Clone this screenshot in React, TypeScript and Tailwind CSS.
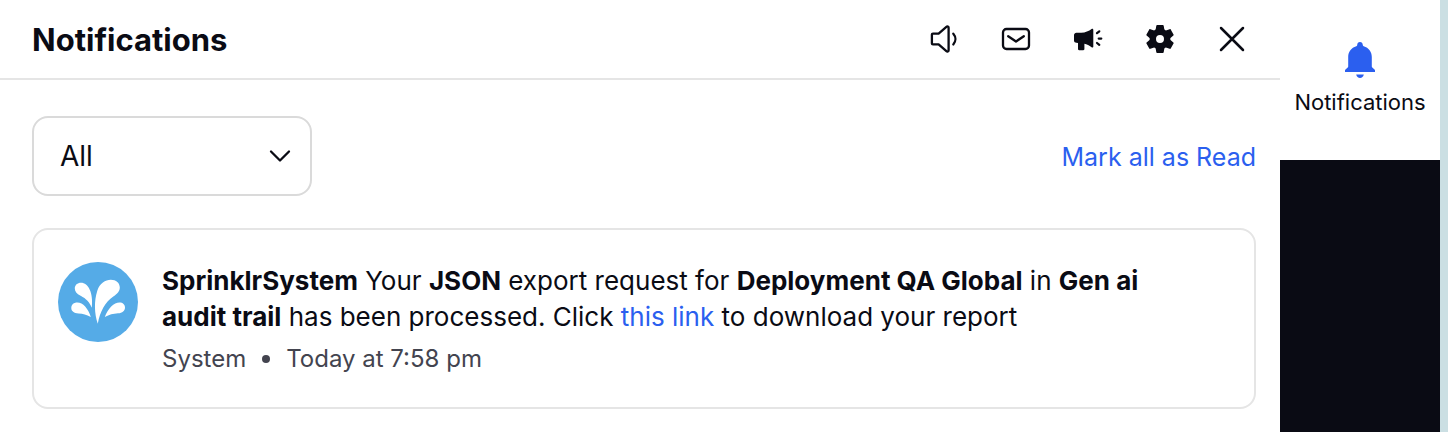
import type { ReactNode } from 'react';

type IconButtonProps = { label: string; children: ReactNode };

function IconButton({ label, children }: IconButtonProps) {
  return (
    <button type="button" aria-label={label} className="flex size-8 items-center justify-center">
      {children}
    </button>
  );
}

const line = {
  fill: 'none',
  stroke: 'currentColor',
  strokeWidth: 2.3,
  strokeLinecap: 'round',
  strokeLinejoin: 'round',
} as const;

function SpeakerIcon() {
  return (
    <svg viewBox="0 0 32 32" className="size-8" {...line}>
      <path d="M4.900 10.600h5.700l7.800-6.800c.9-.8 2.200-.3 2.200.9v22.600c0 1.200-1.300 1.700-2.200.9l-7.800-6.800H4.900c-.7 0-1-.4-1-1v-8.800c0-.6.3-1 1-1Z" />
      <path d="M25.300 10.700c2.800 3.200 2.800 7.600 0 10.800" />
    </svg>
  );
}

function MailIcon() {
  return (
    <svg viewBox="0 0 32 32" className="size-8" {...line}>
      <rect x="3" y="6" width="26" height="20" rx="3.5" />
      <path d="m8.200 13.200 7.800 5.300 7.800-5.300" />
    </svg>
  );
}

function MegaphoneIcon() {
  return (
    <svg viewBox="0 0 32 32" className="size-8" fill="currentColor">
      <path d="M4.400 9.800h4.700c4.400-.2 7.700-1.900 10.500-3.900.8-.6 1.700-.1 1.700.8v16.800c0 1-.9 1.400-1.700.8-2.300-1.700-4.800-3-7.200-3.500v5.300c0 .7-.4 1.100-1.100 1.100H7.100c-.7 0-1.100-.4-1.100-1.100V20l-1.600-.3c-1.300 0-2.400-1-2.400-2.300v-5.300c0-1.300 1.100-2.300 2.400-2.300Z" />
      <path d="m25 10.200 2.300-1.900M26.700 15.600h2.600M25 20l2.300 1.900" {...line} strokeWidth={2.2} />
    </svg>
  );
}

function GearIcon() {
  return (
    <svg viewBox="0 0 32 32" className="size-8" fill="currentColor">
      <circle cx="16" cy="16" r="7.200" fill="none" stroke="currentColor" strokeWidth="6.400" />
      {[0, 60, 120, 180, 240, 300].map((angle) => (
        <path
          key={angle}
          transform={`rotate(${angle} 16 16)`}
          d="M13.200 2h5.600c.5 0 .8.200.9.700l.8 4.800h-9l.8-4.800c.1-.5.4-.7.900-.7Z"
        />
      ))}
    </svg>
  );
}

function CloseIcon() {
  return (
    <svg viewBox="0 0 32 32" className="size-8" {...line} strokeWidth={2.500}>
      <path d="m5 5 22 22M27 5 5 27" />
    </svg>
  );
}

function BellIcon() {
  return (
    <svg viewBox="0 0 30 36" className="h-9 w-[30px] text-[#2b5fef]" fill="currentColor">
      <path d="M15 0c1.700 0 2.700 1.100 2.800 3 .1.700.3 1 .9 1.200 5 1.500 8.100 5.600 8.100 10.700v9.600c0 .5.200.8.500 1.100l2.200 1.800c.4.300.5.600.5 1V30H0v-1.600c0-.4.1-.7.500-1l2.200-1.800c.3-.3.500-.6.500-1.100v-9.600c0-5.100 3.100-9.200 8.100-10.700.6-.2.800-.5.900-1.200.1-1.900 1.100-3 2.800-3Z" />
      <path d="M11.200 32.500h7.600c-.4 2.300-2 3.500-3.800 3.500s-3.400-1.200-3.800-3.500Z" />
    </svg>
  );
}

function SprinklrLogo() {
  return (
    <svg viewBox="0 0 80 80" role="img" aria-label="Sprinklr" className="size-20 shrink-0">
      <circle cx="40" cy="40" r="40" fill="#55abe7" />
      <g fill="#fff">
        <path d="M39.800 61.800c-3.500-10-3.800-23-.5-33 2.500-7.500 8-11 13.500-11 5.400 0 9 3.300 9 7.800 0 3.500-2 6-6.500 9-8 5.400-13.300 15-15.500 27.200Z" />
        <path d="M33.800 45.800c-2.200-5.500-5.500-9-11.200-12-4-2.100-5.800-4.400-5.800-7.300 0-3.400 2.600-5.700 6.200-5.700 7.300 0 12.500 10 10.800 25Z" />
        <path d="M32.800 55c-4.500-2.500-7.500-3.200-12.300-3.500-4.500-.3-7.200-2.200-7.200-5.500 0-3.200 2.400-5.400 6-5.400 5.800 0 10.800 6 13.500 14.400Z" />
        <path d="M46.800 55c3-8.700 9.200-14.600 14.700-14.600 3.300 0 5.500 2.100 5.500 5 0 3.400-2.600 5.500-7 5.900-5 .4-8.700 1.200-13.200 3.700Z" />
      </g>
    </svg>
  );
}

export default function App() {
  return (
    <div className="flex min-h-screen bg-white font-['Inter',sans-serif] text-[#0a0b14]">
      <main className="min-w-0 flex-1">
        <header className="flex h-20 items-center justify-between border-b-2 border-[#e5e5e5] px-8">
          <h1 className="pt-0.5 text-[31px] leading-10 font-bold">Notifications</h1>
          <div className="flex items-center gap-10">
            <IconButton label="Sound"><SpeakerIcon /></IconButton>
            <IconButton label="Messages"><MailIcon /></IconButton>
            <IconButton label="Announcements"><MegaphoneIcon /></IconButton>
            <IconButton label="Settings"><GearIcon /></IconButton>
            <IconButton label="Close"><CloseIcon /></IconButton>
          </div>
        </header>

        <div className="flex flex-col gap-8 pt-9 pr-6 pb-6 pl-8">
          <div className="flex items-center justify-between">
            <div className="grid w-70 items-center">
              <select
                aria-label="Filter notifications"
                className="col-start-1 row-start-1 h-20 w-full appearance-none rounded-2xl border-2 border-[#dadada] bg-white px-[26px] text-[28px]"
              >
                <option>All</option>
              </select>
              <svg
                viewBox="0 0 24 24"
                className="pointer-events-none col-start-1 row-start-1 mr-5 size-6 justify-self-end"
                {...line}
              >
                <path d="m3 7.500 9 9 9-9" />
              </svg>
            </div>
            <button type="button" className="pt-0.5 text-[25px] leading-9 text-[#2b5fef]">
              Mark all as Read
            </button>
          </div>

          <article className="flex gap-6 rounded-2xl border-2 border-[#e5e5e5] px-6 py-8">
            <SprinklrLogo />
            <div className="min-w-0 flex-1 pt-px pr-16">
              <p className="text-[26px] leading-9">
                <strong className="font-bold">SprinklrSystem</strong> Your{' '}
                <strong className="font-bold">JSON</strong> export request for{' '}
                <strong className="font-bold">Deployment QA Global</strong> in{' '}
                <strong className="font-bold">Gen ai audit trail</strong> has been processed. Click{' '}
                <a href="#report" className="text-[#2b5fef]">this link</a> to download your report
              </p>
              <p className="mt-2 flex items-center gap-4 text-2xl leading-8 text-[#43444f]">
                <span>System</span>
                <span className="size-2 rounded-full bg-current" />
                <span>Today at 7:58 pm</span>
              </p>
            </div>
          </article>
        </div>
      </main>

      <aside className="flex w-40 shrink-0 flex-col bg-[#0a0b14]">
        <button type="button" className="flex h-40 flex-col items-center gap-2 bg-white pt-[42px]">
          <BellIcon />
          <span className="text-[22px] leading-8">Notifications</span>
        </button>
      </aside>
      <div className="w-2 shrink-0 bg-[#cbdfe3]" />
    </div>
  );
}
